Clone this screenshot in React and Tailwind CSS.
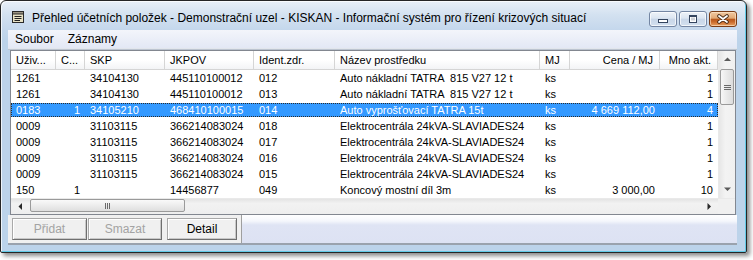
import React from 'react';

const cols = [
  { title: 'Uživ...', w: 'w-[45px]' },
  { title: 'C...', w: 'w-[29px]', right: true, headLeft: true },
  { title: 'SKP', w: 'w-[80px]' },
  { title: 'JKPOV', w: 'w-[89px]' },
  { title: 'Ident.zdr.', w: 'w-[81px]' },
  { title: 'Název prostředku', w: 'w-[205px]' },
  { title: 'MJ', w: 'w-[30px]' },
  { title: 'Cena / MJ', w: 'w-[90px]', right: true },
  { title: 'Mno akt.', w: 'w-[58px]', right: true },
];

const rows = [
  ['1261', '', '34104130', '445110100012', '012', 'Auto nákladní TATRA  815 V27 12 t', 'ks', '', '1'],
  ['1261', '', '34104130', '445110100012', '013', 'Auto nákladní TATRA  815 V27 12 t', 'ks', '', '1'],
  ['0183', '1', '34105210', '468410100015', '014', 'Auto vyprošťovací TATRA 15t', 'ks', '4 669 112,00', '4'],
  ['0009', '', '31103115', '366214083024', '018', 'Elektrocentrála 24kVA-SLAVIADES24', 'ks', '', '1'],
  ['0009', '', '31103115', '366214083024', '017', 'Elektrocentrála 24kVA-SLAVIADES24', 'ks', '', '1'],
  ['0009', '', '31103115', '366214083024', '016', 'Elektrocentrála 24kVA-SLAVIADES24', 'ks', '', '1'],
  ['0009', '', '31103115', '366214083024', '015', 'Elektrocentrála 24kVA-SLAVIADES24', 'ks', '', '1'],
  ['150', '1', '', '14456877', '049', 'Koncový mostní díl 3m', 'ks', '3 000,00', '10'],
];

function AppIcon() {
  return (
    <svg width="14" height="14" viewBox="0 0 14 14">
      <rect x="1.5" y="1.5" width="11" height="11" fill="#e8e2c4" stroke="#2a2a2a" />
      <rect x="1.5" y="1.5" width="11" height="2.5" fill="#9b9482" stroke="#2a2a2a" />
      <line x1="3.5" y1="6.5" x2="10.5" y2="6.5" stroke="#222" />
      <line x1="3.5" y1="8.5" x2="10.5" y2="8.5" stroke="#222" />
      <line x1="3.5" y1="10.5" x2="9" y2="10.5" stroke="#222" />
    </svg>
  );
}

function CaptionButton({ kind }) {
  const base =
    'w-[28px] h-[16px] rounded-[3px] border flex items-center justify-center';
  if (kind === 'close') {
    return (
      <div
        className={`${base} border-[#7a3c16] bg-[linear-gradient(to_bottom,#f1c9a2_0%,#e2a874_45%,#b6561b_50%,#c9692a_70%,#eaa262_100%)] shadow-[inset_0_0_0_1px_rgba(255,235,210,0.6)]`}
      >
        <svg width="14" height="10" viewBox="0 0 14 10">
          <path d="M3 2 L11 8 M11 2 L3 8" stroke="#4a2a14" strokeWidth="3.6" strokeLinecap="round" />
          <path d="M3 2 L11 8 M11 2 L3 8" stroke="#ffffff" strokeWidth="1.8" strokeLinecap="round" />
        </svg>
      </div>
    );
  }
  return (
    <div
      className={`${base} border-[#7486a3] bg-[linear-gradient(to_bottom,#eef3f9_0%,#dbe5f1_45%,#c8d6e8_50%,#d3e0ef_100%)] shadow-[inset_0_0_0_1px_rgba(255,255,255,0.7)]`}
    >
      {kind === 'min' ? (
        <svg width="12" height="10" viewBox="0 0 12 10">
          <rect x="1.5" y="5.5" width="9" height="3" fill="#fff" stroke="#34455f" />
        </svg>
      ) : (
        <svg width="12" height="10" viewBox="0 0 12 10">
          <rect x="2.5" y="1.5" width="7" height="7" fill="#fff" stroke="#34455f" />
          <rect x="4" y="3.5" width="4" height="3" fill="#34455f" opacity="0.25" />
          <line x1="2.5" y1="2.5" x2="9.5" y2="2.5" stroke="#34455f" />
        </svg>
      )}
    </div>
  );
}

function Tri({ dir, color = '#3c3c3c' }) {
  const d = {
    up: 'M0 4 L3.5 0.5 L7 4 Z',
    down: 'M0 0.5 L3.5 4 L7 0.5 Z',
    left: 'M4 0 L0.5 3.5 L4 7 Z',
    right: 'M0.5 0 L4 3.5 L0.5 7 Z',
  }[dir];
  const vert = dir === 'up' || dir === 'down';
  return (
    <svg width={vert ? 7 : 5} height={vert ? 5 : 7} viewBox={vert ? '0 0 7 5' : '0 0 5 7'}>
      <path d={d} fill={color} />
    </svg>
  );
}

function VScroll() {
  return (
    <div className="w-[17px] h-full flex flex-col bg-[linear-gradient(to_right,#e6e6e6,#f3f3f3_40%,#f0f0f0)] border-l border-[#e9e9e9]">
      <div className="h-[17px] flex items-center justify-center shrink-0">
        <Tri dir="up" color="#5a5a5a" />
      </div>
      <div className="h-[36px] mx-[1px] mt-px rounded-[2px] border border-[#9a9a9a] bg-[linear-gradient(to_right,#f7f7f7,#e9e9e9_50%,#dcdcdc)] flex flex-col items-center justify-center gap-[1px] shrink-0">
        <div className="w-[7px] h-px bg-[#6a6a6a]" />
        <div className="w-[7px] h-px bg-[#6a6a6a]" />
        <div className="w-[7px] h-px bg-[#6a6a6a]" />
      </div>
      <div className="flex-1" />
      <div className="h-[17px] flex items-center justify-center shrink-0">
        <Tri dir="down" color="#5a5a5a" />
      </div>
    </div>
  );
}

function HScroll() {
  return (
    <div className="w-[707px] h-full flex items-stretch bg-[linear-gradient(to_bottom,#e4e4e4,#f2f2f2_30%,#eeeeee)] border-t border-[#e9e9e9]">
      <div className="w-[18px] flex items-center justify-center shrink-0">
        <Tri dir="left" color="#2a2a2a" />
      </div>
      <div className="w-[155px] ml-px mb-[2px] rounded-[2px] border border-[#9a9a9a] bg-[linear-gradient(to_bottom,#f9f9f9,#ececec_50%,#dedede)] flex items-center justify-center gap-[1px] shrink-0">
        <div className="w-px h-[6px] bg-[#6a6a6a]" />
        <div className="w-px h-[6px] bg-[#6a6a6a]" />
        <div className="w-px h-[6px] bg-[#6a6a6a]" />
      </div>
      <div className="flex-1" />
      <div className="w-[18px] flex items-center justify-center shrink-0">
        <Tri dir="right" color="#2a2a2a" />
      </div>
    </div>
  );
}

function Btn({ label, disabled, w }) {
  return (
    <div
      className={`${w} h-[22px] shrink-0 flex items-center justify-center border border-[#a9a9a9] border-r-[#6f6f6f] border-b-[#6f6f6f] bg-[#f0f0f0] shadow-[inset_1px_1px_0_#ffffff,inset_-1px_-1px_0_#c8c8c8] text-[12px] ${
        disabled ? 'text-[#a3a3a3]' : 'text-black'
      }`}
    >
      {label}
    </div>
  );
}

export default function App() {
  return (
    <div className="w-[753px] h-[260px] bg-white font-['Liberation_Sans',Arial,sans-serif] text-black overflow-hidden">
      <div className="w-[747px] h-[253px] flex flex-col border border-[#262626] rounded-t-[6px] rounded-b-[2px] bg-[linear-gradient(to_bottom,#e9f0f8,#d3e1f0_14px,#c4d7ec_29px,#bcd3ea_40px,#bcd3ea)] shadow-[inset_1px_1px_0_rgba(255,255,255,0.75),inset_-1px_-1px_0_#63cbe8,3px_3px_4px_rgba(0,0,0,0.45)]">
        {/* Title bar */}
        <div className="h-[29px] shrink-0 flex items-start pl-[10px] pr-[9px]">
          <div className="mt-[9px]">
            <AppIcon />
          </div>
          <div className="ml-[7px] mt-[9px] text-[12px] leading-[16px] whitespace-nowrap flex-1">
            Přehled účetních položek - Demonstrační uzel - KISKAN - Informační systém pro řízení krizových situací
          </div>
          <div className="mt-[10px] flex gap-[2px]">
            <CaptionButton kind="min" />
            <CaptionButton kind="max" />
            <CaptionButton kind="close" />
          </div>
        </div>

        {/* Client area */}
        <div className="flex-1 flex flex-col ml-[7px] mr-[9px]">
          {/* Menu */}
          <div className="h-[18px] shrink-0 flex items-center text-[12px] leading-[18px] bg-[linear-gradient(to_bottom,#f3f5fb,#e3e8f5)]">
            <span className="px-[7px]">Soubor</span>
            <span className="px-[7px]">Záznamy</span>
          </div>
          <div className="h-[2px] shrink-0 bg-[linear-gradient(to_bottom,#f5f7fb,#a9b3c2)]" />

          {/* List view */}
          <div className="ml-[2px] w-[726px] h-[165px] shrink-0 border border-[#828790] bg-white flex flex-col text-[11px]">
            <div className="flex h-[147px]">
              <div className="w-[707px] flex flex-col">
                <div className="h-[19px] flex shrink-0 border-b border-[#d5d5d5] bg-[linear-gradient(to_bottom,#ffffff,#ffffff_50%,#f3f4f6)]">
                  {cols.map((c) => (
                    <div
                      key={c.title}
                      className={`${c.w} shrink-0 h-full flex items-center overflow-hidden whitespace-nowrap border-r border-[#d5d5d5] ${
                        c.right && !c.headLeft ? 'justify-end pr-[6px]' : 'pl-[5px]'
                      }`}
                    >
                      {c.title}
                    </div>
                  ))}
                </div>
                {rows.map((r, i) => {
                  const sel = i === 2;
                  return (
                    <div key={i} className="h-[16px] flex items-center shrink-0">
                      <div
                        className={`h-[14px] w-full flex items-center ${
                          sel
                            ? 'bg-[#3399ff] text-white border border-dotted border-[#2c2c2c]'
                            : 'border border-transparent'
                        }`}
                      >
                        {cols.map((c, j) => (
                          <div
                            key={j}
                            className={`${c.w} shrink-0 overflow-hidden whitespace-pre leading-[14px] ${
                              c.right ? 'text-right pr-[6px]' : 'pl-[4px]'
                            }`}
                          >
                            {r[j]}
                          </div>
                        ))}
                      </div>
                    </div>
                  );
                })}
              </div>
              <VScroll />
            </div>
            <div className="flex h-[16px] shrink-0">
              <HScroll />
              <div className="w-[17px] bg-[#f0f0f0] border-t border-[#e9e9e9]" />
            </div>
          </div>

          {/* Bottom strip */}
          <div className="flex-1 flex border-b-2 border-[#9aa2ad]">
            <div className="w-[234px] shrink-0 bg-[#f0f0f0] border-r border-[#9f9f9f] flex items-start pt-[3px] pl-[4px]">
              <Btn label="Přidat" disabled w="w-[75px]" />
              <div className="ml-px">
                <Btn label="Smazat" disabled w="w-[74px]" />
              </div>
              <div className="ml-[5px]">
                <Btn label="Detail" w="w-[70px]" />
              </div>
            </div>
            <div className="flex-1 bg-[linear-gradient(to_bottom,#ffffff,#f5f7fc_6px,#dfe4f4_10px,#dde2f3)]" />
          </div>
        </div>
        <div className="h-[7px] shrink-0" />
      </div>
    </div>
  );
}
